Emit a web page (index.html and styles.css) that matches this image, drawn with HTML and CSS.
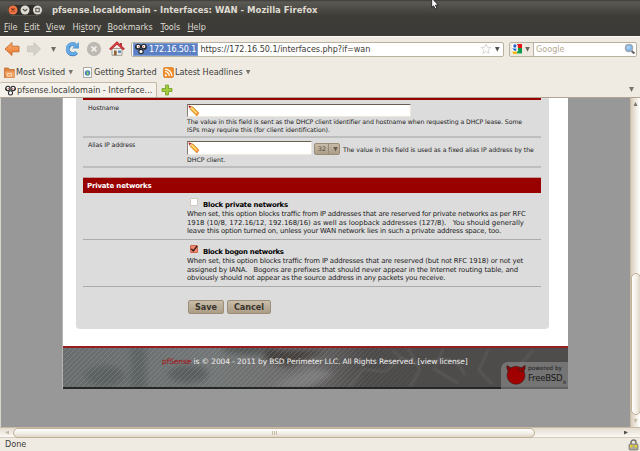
FILE: index.html
```html
<!DOCTYPE html>
<html lang="en">
<head>
<meta charset="utf-8">
<title>pfsense.localdomain - Interfaces: WAN - Mozilla Firefox</title>
<link rel="stylesheet" href="styles.css">
</head>
<body>
<svg class="defs" width="0" height="0">
  <defs>
    <symbol id="pf" viewBox="0 0 12 12"><g fill="#fff" stroke="#222" stroke-width="1.100"><circle cx="3.200" cy="3.600" r="2.300"/><circle cx="8.800" cy="3.600" r="2.300"/><circle cx="6" cy="8.600" r="2.200"/></g><path d="M.8 3v2.500L3 6.500M11.200 3v2.500L9 6.500" stroke="#222" stroke-width=".9" fill="none"/><circle cx="3.600" cy="3.800" r=".8" fill="#c66"/><circle cx="8.400" cy="3.800" r=".8" fill="#c66"/></symbol>
    <symbol id="pencil" viewBox="0 0 12 12"><path d="M1 1l4 1 6 6-2.500 2.800-6-6z" fill="#f7a720" stroke="#b96d13" stroke-width=".5"/><path d="M3.500 3l6 6" stroke="#ffe08a" stroke-width="1.200"/><path d="M.8.800L4.500 2 2.200 4.500z" fill="#eec0a0"/><path d="M.5.500l2.800.800-1.800 2z" fill="#c01515"/><path d="M9.600 7l1.700 1.600-2.200 2.600-1.800-1.700z" fill="#f3994d"/></symbol>
    <linearGradient id="or" x1="0" y1="0" x2="0" y2="1"><stop offset="0" stop-color="#fbb06f"/><stop offset="1" stop-color="#e9742c"/></linearGradient>
  </defs>
</svg>
<div class="window">
  <header class="chrome">
    <div class="titlebar">
      <div class="controls">
        <svg width="36" height="12" viewBox="0 0 36 12"><rect x=".5" y=".5" width="35" height="11" rx="5.500" fill="#302f2b" stroke="#5e5c55" stroke-width=".7"/><circle cx="6" cy="6" r="4.500" fill="#ef7443"/><path d="M4.400 4.400l3.200 3.200m0-3.200L4.400 7.600" stroke="#6e2c13" stroke-width="1.100"/><circle cx="18" cy="6" r="4.500" fill="#dedbd3"/><path d="M15.800 5l2.200 2 2.200-2" stroke="#55524b" fill="none" stroke-width="1.100"/><circle cx="30.500" cy="6" r="4.500" fill="#dedbd3"/><rect x="28.800" y="4.300" width="3.400" height="3.400" stroke="#55524b" fill="none"/></svg>
      </div>
      <span class="title">pfsense.localdomain - Interfaces: WAN - Mozilla Firefox</span>
    </div>
    <nav class="menubar">
      <span class="m-file"><u>F</u>ile</span><span class="m-edit"><u>E</u>dit</span><span class="m-view"><u>V</u>iew</span><span class="m-hist">Hi<u>s</u>tory</span><span class="m-book"><u>B</u>ookmarks</span><span class="m-tools"><u>T</u>ools</span><span class="m-help"><u>H</u>elp</span>
    </nav>
  </header>

  <div class="toolbar">
    <svg class="navicons" width="126" height="18" viewBox="0 0 126 18">
      <path d="M5 9l7-6.500v3.700h7v5.600h-7v3.700z" fill="url(#or)" stroke="#c2622a" stroke-width=".8"/>
      <path d="M40.500 9L34 2.500v3.700h-6.500v5.600H34v3.700z" fill="#d4d1ca" stroke="#c2beb6" stroke-width=".7"/>
      <path d="M51 7h5l-2.500 5z" fill="#716d66"/>
      <path d="M76.500 12.500A5 5 0 1 1 75.500 5" fill="none" stroke="#397ec1" stroke-width="4"/><path d="M76.300 12A5 5 0 1 1 75.500 5" fill="none" stroke="#68aae2" stroke-width="3"/><path d="M79 2v6.500h-7z" fill="#5b9fdc"/>
      <circle cx="94" cy="9" r="6.700" fill="#bdbab4" stroke="#aaa6a0" stroke-width=".5"/><path d="M91.600 6.600l4.800 4.800m0-4.800l-4.800 4.800" stroke="#f2f0ec" stroke-width="1.700"/>
      <path d="M112 8.500h10v6.800h-10z" fill="#efede9" stroke="#837e76" stroke-width=".7"/><path d="M120 3h2v4h-2z" fill="#bd3939"/><path d="M110 9.500l7-6.700 7 6.700" fill="none" stroke="#b51f23" stroke-width="2.400"/><path d="M110.500 9l6.500-6.200 6.500 6.200" fill="none" stroke="#e65355" stroke-width="1"/><path d="M114 10.500h2.600v4.800H114z" fill="#8e6037"/><path d="M118 10.500h3v2.500h-3z" fill="#668cb9"/>
    </svg>
    <div class="address">
      <div class="identity"><svg width="12" height="12"><use href="#pf"/></svg><span>172.16.50.1</span></div>
      <span class="url">https://172.16.50.1/interfaces.php?if=wan</span>
      <svg class="addr-end" width="22" height="12" viewBox="0 0 22 12"><path d="M6 1l1.400 3.200 3.500.3-2.700 2.300.9 3.500L6 8.500l-3.100 1.800.9-3.500L1.100 4.500l3.500-.3z" fill="#fff" stroke="#c8c4bd" stroke-width=".7"/><path d="M15 4h4.600L17.300 8.800z" fill="#55524c"/></svg>
    </div>
    <div class="search">
      <div class="engine"><svg width="20" height="12" viewBox="0 0 20 12"><path d="M1 1h10v10H1z" fill="#fff"/><path d="M6 1h5v4H7z" fill="#e91515"/><path d="M7 5h4v5.500H6z" fill="#129a4c"/><path d="M1 8.500h5V11H2z" fill="#f4b713"/><path d="M1 5.500l3 2.500 2-1V5.500z" fill="#1961cb"/><circle cx="4" cy="3" r="1.800" fill="#2363cc"/><path d="M6.500 2L5 5.500l2 2.500" fill="none" stroke="#fff"/><path d="M14.200 4h4.600L16.500 8.800z" fill="#6b665e"/></svg></div>
      <span class="placeholder">Google</span>
      <svg width="12" height="12" viewBox="0 0 12 12"><path d="M7 7.500l3.500 3" stroke="#666" stroke-width="2.200"/><circle cx="5" cy="5" r="3.900" fill="#83b4e3" stroke="#aaa9a7"/><circle cx="4.500" cy="4.500" r="1.800" fill="#add0f2"/></svg>
    </div>
  </div>

  <div class="bookmarks">
    <span class="bm bm1"><svg width="11" height="11" viewBox="0 0 11 11"><path d="M.5 1h4l1 1.500h4.800v8H.5z" fill="#de8742" stroke="#b8622c" stroke-width=".7"/><path d="M1 4.500h9.500v6H2z" fill="#f2a467"/><path d="M3.500 6.500h4v2.500h-4z" fill="none" stroke="#fbe0c3" stroke-width=".8"/></svg><span class="t">Most Visited</span><i class="tri"></i></span>
    <span class="bm bm2"><svg width="11" height="11" viewBox="0 0 11 11"><path d="M1.500.5h8v10h-8z" fill="#fbfbfa" stroke="#96938d" stroke-width=".8"/><circle cx="5.500" cy="6" r="2.700" fill="#467cbd"/><path d="M4.500 4l2 1v2.500l-1.500.5z" fill="#8bd25f"/></svg><span class="t">Getting Started</span></span>
    <span class="bm bm3"><svg width="11" height="11" viewBox="0 0 11 11"><rect x=".5" y=".5" width="10" height="10" rx="1.500" fill="#f38b27" stroke="#d46e12" stroke-width=".6"/><circle cx="2.800" cy="8.300" r="1.100" fill="#fff"/><path d="M2 4.700a4.300 4.300 0 0 1 4.300 4.400M2 2.200a6.900 6.900 0 0 1 6.900 6.900" fill="none" stroke="#fff" stroke-width="1.200"/></svg><span class="t">Latest Headlines</span><i class="tri"></i></span>
  </div>

  <div class="tabs">
    <div class="tab"><svg width="11" height="11"><use href="#pf"/></svg><span>pfsense.localdomain - Interface...</span></div>
    <svg class="plus" width="12" height="12" viewBox="0 0 12 12"><path d="M4.500 1h3v3.500H11v3H7.500V11h-3V7.500H1v-3h3.500z" fill="#a1cb3d" stroke="#6f9e23" stroke-width=".8"/></svg>
    <i class="tri last"></i>
  </div>

  <div class="viewport">
    <main class="page">
      <section class="panel">
        <div class="strip"></div>
        <div class="row host">
          <span class="label lh">Hostname</span>
          <div class="field">
            <div class="input wide"><svg width="12" height="12"><use href="#pencil"/></svg></div>
            <p class="note n1">The value in this field is sent as the DHCP client identifier and hostname when requesting a DHCP lease. Some</p>
            <p class="note n2">ISPs may require this (for client identification).</p>
          </div>
        </div>
        <div class="row alias">
          <span class="label la">Alias IP address</span>
          <div class="field">
            <div class="inline">
              <div class="input short"><svg width="12" height="12"><use href="#pencil"/></svg></div>
              <div class="select"><span>32</span><i class="tri"></i></div>
              <p class="note n3">The value in this field is used as a fixed alias IP address by the</p>
            </div>
            <p class="note n4">DHCP client.</p>
          </div>
        </div>
        <h2><span>Private networks</span></h2>
        <div class="option first">
          <div class="check"><i class="box"></i><b class="c1">Block private networks</b></div>
          <p class="o1">When set, this option blocks traffic from IP addresses that are reserved for private networks as per RFC</p>
          <p class="o2">1918 (10/8, 172.16/12, 192.168/16) as well as loopback addresses (127/8). &nbsp; You should generally</p>
          <p class="o3">leave this option turned on, unless your WAN network lies in such a private address space, too.</p>
        </div>
        <div class="option">
          <div class="check"><i class="box on"><svg width="8" height="8" viewBox="0 0 8 8"><path d="M1.300 3.700l2 2.300L7 1" fill="none" stroke="#34201c" stroke-width="1.300"/></svg></i><b class="c2">Block bogon networks</b></div>
          <p class="o4">When set, this option blocks traffic from IP addresses that are reserved (but not RFC 1918) or not yet</p>
          <p class="o5">assigned by IANA. &nbsp; Bogons are prefixes that should never appear in the Internet routing table, and</p>
          <p class="o6">obviously should not appear as the source address in any packets you receive.</p>
        </div>
        <div class="actions"><span class="btn save">Save</span><span class="btn cancel">Cancel</span></div>
      </section>
      <footer>
        <svg class="texture" width="505" height="43" viewBox="0 0 505 43">
          <defs>
            <linearGradient id="fg"><stop offset="0" stop-color="#696d6d"/><stop offset=".3" stop-color="#737676"/><stop offset=".48" stop-color="#6b6969"/><stop offset=".6" stop-color="#4d4b4a"/><stop offset="1" stop-color="#4f4d4c"/></linearGradient>
            <pattern id="st" width="5" height="5" patternUnits="userSpaceOnUse"><path d="M-1 6L6-1" stroke="#b5b8b8" stroke-opacity=".3" stroke-width=".8"/></pattern>
            <linearGradient id="fade"><stop offset="0" stop-color="#fff"/><stop offset=".5" stop-color="#fff"/><stop offset=".75" stop-color="#000"/></linearGradient>
            <mask id="mk"><rect width="505" height="43" fill="url(#fade)"/></mask>
            <filter id="bl"><feGaussianBlur stdDeviation="3"/></filter>
            <filter id="bs"><feGaussianBlur stdDeviation=".8"/></filter>
          </defs>
          <rect width="505" height="43" fill="url(#fg)"/>
          <g filter="url(#bl)"><path d="M68 0h15v43H67z" fill="#565b5b" opacity=".7"/><ellipse cx="42" cy="30" rx="20" ry="10" fill="#555a5a" opacity=".7"/><ellipse cx="125" cy="28" rx="20" ry="9" fill="#545959" opacity=".8"/><ellipse cx="187" cy="3" rx="28" ry="5" fill="#505353"/><path d="M205 3l60 1-40 17-25-8z" fill="#453f3e"/><path d="M205 40l45-18 22 5-30 16z" fill="#7d7b7b"/></g>
          <rect width="505" height="43" fill="url(#st)" mask="url(#mk)"/>
          <path filter="url(#bs)" d="M285 43l15-20 22 3 18-15M330 5q18 17 40 10t32 14M345 2l12 22-10 17M370 22l25 15M425 4l-9 20 13 14M470 4l-15 18M380 3l-7 17" fill="none" stroke="#aaa6a4" stroke-opacity=".22" stroke-width="1.500"/>
          <rect width="505" height="2" fill="#941f22"/><rect y="41" width="505" height="2" fill="#252727"/>
        </svg>
        <p class="copy"><span>pfSense</span> is © 2004 - 2011 by BSD Perimeter LLC. All Rights Reserved. [view license]</p>
        <div class="bsd">
          <svg width="22" height="22" viewBox="0 0 22 22"><path d="M2 1.500Q1 5 4 8l5-3.500Q5 4 2 1.500zM20 1.500Q21 5 18 8l-5-3.500Q17 4 20 1.500z" fill="#960000" stroke="#25201f" stroke-width=".6"/><circle cx="11" cy="11.300" r="9" fill="#a10000" stroke="#32201f" stroke-width=".6"/><path d="M13 4.500q2 3.500 4.500 3" fill="none" stroke="#25201f"/></svg>
          <div class="bsdtext"><small>powered by</small><strong>FreeBSD<sub>®</sub></strong></div>
        </div>
      </footer>
    </main>
    <div class="vscroll"><i class="up"></i><i class="vthumb"></i><i class="down"></i></div>
  </div>
  <div class="hscroll"><i class="left"></i><div class="hthumb"><i></i><i></i><i></i></div><i class="right"></i></div>
  <div class="status"><span>Done</span><svg width="11" height="12" viewBox="0 0 11 12"><path d="M3 6V3.500a2.500 2.500 0 0 1 5 0V6" fill="none" stroke="#77766f" stroke-width="1.500"/><rect x="1" y="5" width="9" height="6" rx="1" fill="#aaa99a" stroke="#6f6e66" stroke-width=".7"/><path d="M2 6h3l-1 2.500H2zM6 6h3v2.500H7z" fill="#e5cf28"/></svg></div>
  <svg class="cursor" width="9" height="12" viewBox="0 0 9 12"><path d="M.7-2v9.500l2-1.700L4.200 9l1.700-.8-1.500-3 2.800-.2L.7-2z" fill="#fff" stroke="#111" stroke-width=".8"/></svg>
</div>
</body>
</html>
```
FILE: styles.css
```css
* { box-sizing: border-box; }
body { margin: 0; width: 640px; height: 451px; overflow: hidden; font-family: "DejaVu Sans Condensed", "DejaVu Sans", sans-serif; font-size: 9px; color: #3c3b37; }
p, h2 { margin: 0; white-space: nowrap; font-weight: normal; }
svg { display: block; flex: none; }
.defs { position: absolute; }
.window { position: relative; width: 640px; height: 451px; background: #efebe3; display: flex; flex-direction: column; white-space: nowrap; }
.chrome { height: 36px; background: linear-gradient(#3c3b37 0, #5b5953 2px, #3d3c37 16px, #3c3b37); color: #dfdbd2; }
.titlebar { height: 20px; display: flex; align-items: center; padding-left: 7px; gap: 9px; }
.title { font-family: "DejaVu Sans", sans-serif; font-weight: bold; font-size: 8.500px; }
.menubar { height: 13px; display: flex; align-items: center; padding-left: 4px; }
.menubar u { text-underline-offset: 1px; text-decoration-thickness: 1px; }
.m-file { width: 20px; } .m-edit { width: 22px; } .m-view { width: 26.500px; } .m-hist { width: 35px; } .m-book { width: 53px; } .m-tools { width: 27px; }
.tri { display: block; width: 5px; height: 5px; background: #77736b; clip-path: polygon(0 0, 100% 0, 50% 100%); flex: none; }

.toolbar { height: 26px; display: flex; align-items: center; border-top: 1px solid #fbf9f5; padding-bottom: 1px; }
.navicons { margin-right: 5px; }
.address { width: 373px; height: 15px; border: 1px solid #b9b09f; border-radius: 2px; background: #fff; display: flex; align-items: center; padding: 0 1px; }
.identity { width: 65px; height: 13px; background: #5a7fc4; border: 1px solid #7e9cd2; color: #fff; display: flex; align-items: center; padding-left: 1px; gap: 2px; letter-spacing: -.15px; }
.identity span, .url, .placeholder { padding-bottom: 1px; }
.url { margin-left: 2.500px; flex: 1; letter-spacing: -.05px; }
.search { margin-left: 5px; width: 128px; height: 15px; border: 1px solid #b9b09f; border-radius: 2px; background: #fff; display: flex; align-items: center; }
.engine { width: 24px; height: 13px; background: #efebe3; border-right: 1px solid #b9b09f; padding-left: 1px; }
.placeholder { color: #b5a992; flex: 1; padding-left: 2px; }

.bookmarks { height: 20px; display: flex; align-items: center; }
.bm { display: flex; align-items: center; gap: 1px; }
.bm .t { padding-bottom: 1px; }
.bm .tri { margin-left: 2px; }
.bm1 { width: 79px; padding-left: 4px; } .bm2 { width: 80px; padding-left: 3px; } .bm3 { padding-left: 4px; }

.tabs { height: 16px; display: flex; align-items: center; border-bottom: 1px solid #b2a591; }
.tab { width: 157px; height: 15px; border: 1px solid #c5b9a5; border-left: 0; border-bottom: 0; border-radius: 2px 2px 0 0; background: #f5f2ec; display: flex; align-items: center; padding-left: 5px; gap: 1px; }
.plus { margin-left: 4px; }
.last { margin-left: auto; margin-right: 6px; }

.viewport { height: 329px; background: #989898; border-left: 1px solid #d8d4cc; display: flex; font-family: "DejaVu Sans", sans-serif; }
.page { width: 505px; height: 291px; margin-left: 62px; background: #fff; box-shadow: -1px 0 #b3b3b3; }
.panel { height: 231px; width: 473px; margin-left: 13px; padding: 0 8px 0 7px; background: #dcdcdc; border-radius: 0 0 4px 4px; margin-bottom: 17px; color: #222; }
.strip { height: 2px; background: #990000; }
.row { display: flex; border-bottom: 2px solid #bebebe; font-size: 6.200px; }
.host { height: 38px; padding-top: 4px; }
.alias { height: 30px; padding-top: 3px; }
.label { width: 104px; padding-left: 5px; line-height: 8px; letter-spacing: -.08px; }
.input { height: 13px; border: 1px solid #eee8dc; border-top: 1px solid #6c5e50; border-left: 1px solid #8a7d70; background: #fff; flex: none; }
.wide { width: 224px; margin-bottom: 1px; }
.short { width: 125px; height: 14px; }
.note { line-height: 7.500px; }
.n1 { letter-spacing: -.075px; }
.n2 { letter-spacing: -.020px; }
.inline { display: flex; align-items: center; }
.n3 { margin-left: 3px; padding-top: 3px; letter-spacing: -.045px; }
.n4 { margin-top: 1px; }
.select { width: 26px; height: 12px; margin: 2px 0 0 2px; border: 1px solid #9b8c77; border-radius: 2px; background: linear-gradient(#c8bba7, #ab9d87); display: flex; align-items: center; color: #51493f; }
.select span { width: 14px; line-height: 10px; padding-left: 3px; border-right: 1px solid #998b77; }
.select .tri { margin-left: 4px; background: #665b4c; }
h2 { margin-top: 9px; height: 16px; background: #990000; border-top: 1px solid #c39a9a; color: #fff; font-size: 7px; font-weight: bold; line-height: 16px; padding-left: 4px; letter-spacing: -.18px; }
.option { height: 47px; border-bottom: 1px solid #ababab; padding: 5px 0 0 104px; font-size: 6.900px; }
.check { height: 12px; display: flex; padding-left: 3px; }
.check b { color: #000; line-height: 14px; margin-left: 5px; }
.c1 { letter-spacing: -.22px; }
.c2 { letter-spacing: -.27px; }
.option p { line-height: 8.700px; }
.o1 { letter-spacing: -.178px; }
.o2 { letter-spacing: -.010px; }
.o3 { letter-spacing: -.156px; }
.o4 { letter-spacing: -.132px; }
.o5 { letter-spacing: -.110px; }
.o6 { letter-spacing: -.180px; }
.box { width: 8px; height: 8px; background: #fff; border: 1px solid #d2cabd; border-radius: 1px; }
.box.on { background: #f38770; border-color: #ce6450; }
.box svg { margin: -1px; }
.actions { padding: 13px 0 0 105px; display: flex; gap: 3px; }
.btn { height: 14px; line-height: 13px; border: 1px solid #9c8e79; border-radius: 2px; background: linear-gradient(#c9bda9, #ab9d86); text-align: center; font-weight: bold; font-size: 8.100px; color: #39342d; }
.save { width: 36px; } .cancel { width: 44px; }

footer { position: relative; height: 43px; display: flex; justify-content: flex-end; align-items: flex-end; }
.texture { position: absolute; left: 0; top: 0; }
.copy { position: absolute; left: 99px; top: 10px; color: #eee; font-size: 7.500px; line-height: 11px; letter-spacing: -.11px; }
.copy span { color: #a50d12; }
.bsd { position: relative; width: 67px; height: 27px; border-radius: 7px 0 0 0; background: rgba(155, 155, 155, .5); display: flex; padding: 2px 0 0 4px; color: #171717; }
.bsdtext { margin-left: 1px; display: flex; flex-direction: column; }
.bsdtext small { font-size: 5.800px; line-height: 9px; }
.bsdtext strong { font-size: 8.600px; font-weight: normal; line-height: 10px; letter-spacing: -.25px; }
.bsdtext sub { font-size: 4.500px; }

.vscroll { margin-left: auto; width: 10px; background: linear-gradient(90deg, #d8cdbc, #eee8de 50%, #fff); border-left: 1px solid #c8baa3; display: flex; flex-direction: column; align-items: center; }
.up { width: 4px; height: 4px; margin-top: 4px; background: #77736b; clip-path: polygon(50% 0, 100% 100%, 0 100%); }
.vthumb { width: 10px; height: 142px; margin-top: 167px; border: 1px solid #bfb198; border-radius: 5px; background: linear-gradient(90deg, #fff, #f3efe8 50%, #dfd6c8); }
.down { width: 4px; height: 4px; margin-top: 4px; background: #c5b9a5; clip-path: polygon(0 0, 100% 0, 50% 100%); }
.hscroll { height: 11px; border-top: 1px solid #c8baa3; border-bottom: 1px solid #d8cdbc; background: linear-gradient(#e4dccf, #fbf9f5); display: flex; align-items: center; padding-right: 12px; }
.left { width: 4px; height: 4px; margin: 0 4px 0 5px; background: #c5b9a5; clip-path: polygon(100% 0, 100% 100%, 0 50%); }
.right { width: 4px; height: 4px; margin-left: auto; background: #55524c; clip-path: polygon(0 0, 100% 50%, 0 100%); }
.hthumb { width: 522px; height: 10px; border: 1px solid #bfb198; border-radius: 5px; background: linear-gradient(#fff, #f3efe8 50%, #dfd6c8); display: flex; justify-content: center; align-items: center; gap: 1px; }
.hthumb i { width: 1px; height: 4px; background: #c8bca8; }
.status { height: 13px; display: flex; align-items: center; justify-content: space-between; padding: 0 1px 0 5px; }
.status span { padding-bottom: 2px; }
.cursor { position: absolute; left: 431px; top: 0; }
```
